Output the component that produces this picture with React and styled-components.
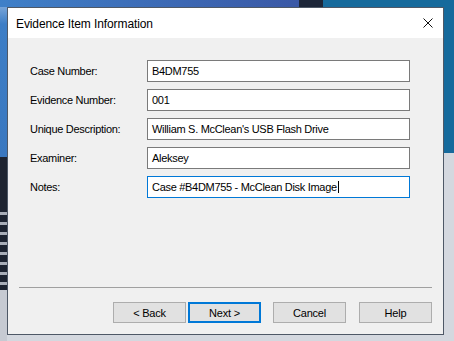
import React from "react";
import styled, { createGlobalStyle } from "styled-components";

const Global = createGlobalStyle`
  html, body { margin: 0; padding: 0; }
  body { width: 454px; height: 341px; overflow: hidden; }
  * { box-sizing: border-box; }
`;

const Desktop = styled.div`
  width: 454px;
  height: 341px;
  padding: 7px 10px 6px 7px;
  background-color: #cfd3da;
  background-image:
    linear-gradient(to right, #3f80c8 0, #3a58a6 299px, #1d2639 299px, #1d2639 323px, #166a9c 323px),
    repeating-linear-gradient(to bottom, transparent 0 7px, #a9aeb8 7px 10px),
    linear-gradient(to bottom, #8fb4e0 0, #3d7ec6 24px, #3a78c0 157px, #1e2431 157px, #1e2431 290px, #c6cad2 290px),
    linear-gradient(to bottom, #166a9c 0, #166a9c 153px, #d4d8df 153px);
  background-size: 100% 7px, 7px 80px, 7px 100%, 100% 100%;
  background-position: 0 0, 0 205px, 0 0, 0 0;
  background-repeat: no-repeat;
`;

const Dialog = styled.div`
  width: 437px;
  height: 328px;
  border: 1px solid #4e5866;
  background: #f0f0f0;
  display: flex;
  flex-direction: column;
  font-family: "Liberation Sans", Arial, sans-serif;
  color: #000;
`;

const TitleBar = styled.div`
  height: 30px;
  flex: none;
  background: #fff;
  display: flex;
  align-items: center;
  justify-content: space-between;
  padding: 0 10px 0 8px;
`;

const Title = styled.div`
  font-size: 12px;
  letter-spacing: -0.1px;
  padding-top: 1px;
`;

const CloseButton = styled.div`
  width: 10px;
  height: 10px;
  display: flex;
  svg { display: block; }
`;

const Body = styled.div`
  flex: 1;
  display: flex;
  flex-direction: column;
  padding: 22px 11px 11px 11px;
`;

const Form = styled.div`
  display: grid;
  grid-template-columns: 117px 263px;
  grid-auto-rows: 22px;
  row-gap: 7px;
  padding-left: 11px;
  align-items: center;
`;

const Label = styled.div`
  font-size: 11px;
  letter-spacing: -0.3px;
`;

const Field = styled.div`
  height: 22px;
  border: 1px solid ${(p) => (p.$focused ? "#0078d7" : "#7a7a7a")};
  background: #fff;
  font-size: 11px;
  letter-spacing: -0.3px;
  display: flex;
  align-items: center;
  padding: 0 0 0 4px;
  white-space: nowrap;
  overflow: hidden;
`;

const Caret = styled.span`
  display: inline-block;
  width: 1px;
  height: 12px;
  background: #000;
  margin-left: 1px;
`;

const Separator = styled.div`
  margin-top: auto;
  height: 1px;
  background: #a0a0a0;
`;

const ButtonRow = styled.div`
  display: flex;
  justify-content: flex-end;
  margin-top: 14px;
`;

const Button = styled.div`
  width: 73px;
  height: 21px;
  margin-left: ${(p) => p.$gap}px;
  background: #e1e1e1;
  border: ${(p) => (p.$default ? "2px solid #0078d7" : "1px solid #adadad")};
  font-size: 11px;
  letter-spacing: -0.2px;
  display: flex;
  align-items: center;
  justify-content: center;
`;

const fields = [
  { label: "Case Number:", value: "B4DM755" },
  { label: "Evidence Number:", value: "001" },
  { label: "Unique Description:", value: "William S. McClean's USB Flash Drive" },
  { label: "Examiner:", value: "Aleksey" },
  { label: "Notes:", value: "Case #B4DM755 - McClean Disk Image", focused: true },
];

export default function App() {
  return (
    <>
      <Global />
      <Desktop>
        <Dialog>
          <TitleBar>
            <Title>Evidence Item Information</Title>
            <CloseButton>
              <svg width="10" height="10" viewBox="0 0 10 10">
                <path d="M0.5 0.5 L9.5 9.5 M9.5 0.5 L0.5 9.5" stroke="#111" strokeWidth="1" fill="none" />
              </svg>
            </CloseButton>
          </TitleBar>
          <Body>
            <Form>
              {fields.map((f) => (
                <React.Fragment key={f.label}>
                  <Label>{f.label}</Label>
                  <Field $focused={f.focused}>
                    {f.value}
                    {f.focused && <Caret />}
                  </Field>
                </React.Fragment>
              ))}
            </Form>
            <Separator />
            <ButtonRow>
              <Button $gap={0}>&lt; Back</Button>
              <Button $gap={2} $default>Next &gt;</Button>
              <Button $gap={12}>Cancel</Button>
              <Button $gap={13}>Help</Button>
            </ButtonRow>
          </Body>
        </Dialog>
      </Desktop>
    </>
  );
}
